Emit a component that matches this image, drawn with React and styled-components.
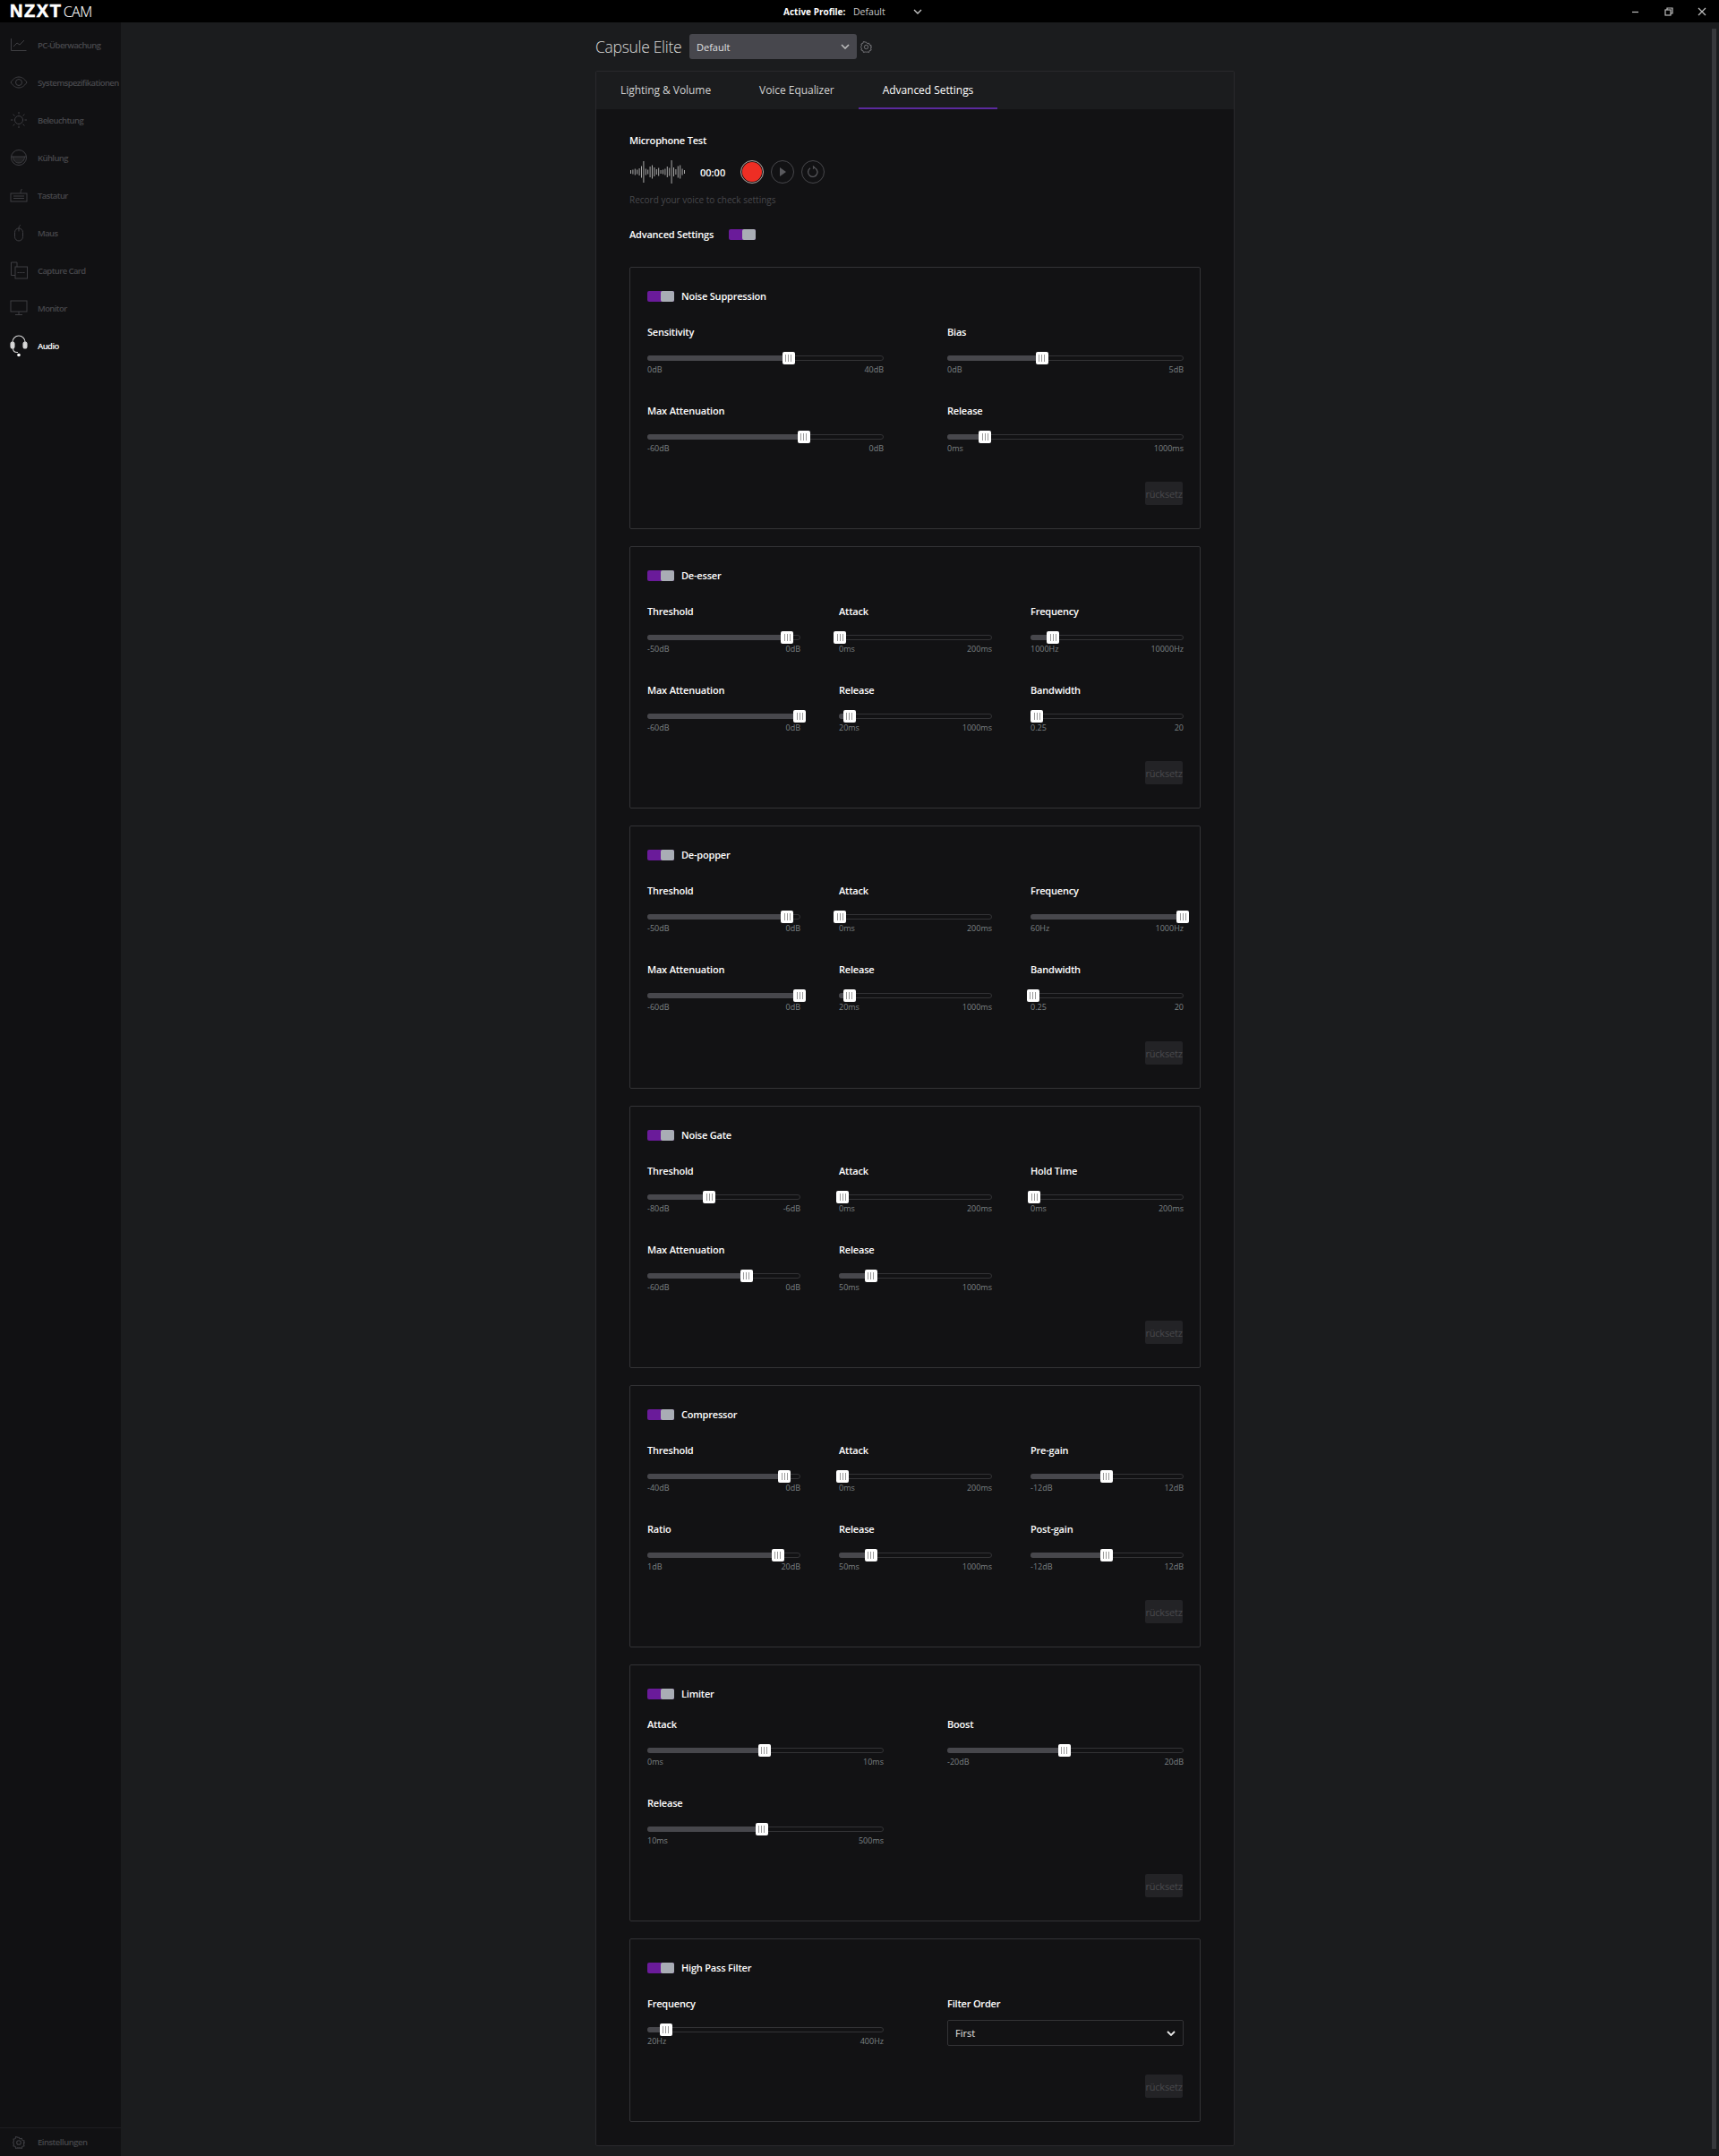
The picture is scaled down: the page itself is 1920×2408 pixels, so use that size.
import React from "react";
import styled, { createGlobalStyle } from "styled-components";

const Global = createGlobalStyle`
  html, body {
    margin: 0;
    padding: 0;
    background: #1b1c1e;
    font-family: "Open Sans", "Noto Sans", sans-serif;
  }
  * { box-sizing: border-box; }
`;

const Shell = styled.div`
  width: 1920px;
  height: 2408px;
  display: flex;
  flex-direction: column;
  overflow: hidden;
  background: #1b1c1e;
`;

const TopBar = styled.header`
  height: 25px;
  flex: none;
  background: #000;
  display: grid;
  grid-template-columns: 1fr auto 1fr;
  align-items: center;
  color: #fff;
`;

const Logo = styled.div`
  display: flex;
  align-items: baseline;
  padding-left: 11px;
`;

const LogoMark = styled.span`
  font-family: "Liberation Sans", sans-serif;
  font-weight: 700;
  font-size: 20px;
  line-height: 25px;
  letter-spacing: 1.6px;
  -webkit-text-stroke: 0.6px #fff;
`;

const LogoCam = styled.span`
  font-family: "Noto Sans", sans-serif;
  font-weight: 300;
  font-size: 16px;
  letter-spacing: -0.5px;
  margin-left: 1px;
`;

const ProfilePick = styled.div`
  display: flex;
  align-items: center;
  font-size: 10px;
  margin-right: 15px;
`;

const ProfileLabel = styled.span`
  font-weight: 700;
  width: 78px;
`;

const ProfileValue = styled.span`
  color: #c9c9c9;
  width: 67px;
  font-size: 10.5px;
`;

const WindowButtons = styled.div`
  display: flex;
  justify-content: flex-end;
  align-items: center;
  gap: 27px;
  padding-right: 14px;
  color: #bdbdbd;
`;

const Body = styled.div`
  flex: 1;
  display: flex;
  min-height: 0;
`;

const Sidebar = styled.nav`
  width: 135px;
  flex: none;
  background: #111113;
  display: flex;
  flex-direction: column;
  padding-top: 4px;
`;

const NavItem = styled.div`
  height: 42px;
  display: flex;
  align-items: center;
  color: ${(p) => (p.$active ? "#fff" : "#47474b")};
  font-size: 9.5px;
  font-weight: 600;
  letter-spacing: -0.6px;
  white-space: nowrap;
`;

const NavIcon = styled.span`
  width: 42px;
  flex: none;
  display: flex;
  justify-content: center;
  color: ${(p) => (p.$active ? "#d8d8d8" : "#3e3e42")};
`;

const SidebarFoot = styled.div`
  margin-top: auto;
  height: 32px;
  border-top: 1px solid #1d1d20;
  display: flex;
  align-items: center;
  color: #47474b;
  font-size: 9.5px;
  font-weight: 600;
  letter-spacing: -0.5px;
`;

const Main = styled.main`
  flex: 1;
  position: relative;
  padding-left: 530px;
`;

const ScrollTrack = styled.div`
  position: absolute;
  top: 7px;
  right: 3px;
  bottom: 8px;
  width: 5px;
  background: #37383b;
`;

const Column = styled.div`
  width: 714px;
`;

const DeviceRow = styled.div`
  height: 54px;
  display: flex;
  align-items: center;
`;

const DeviceName = styled.h1`
  margin: 0;
  width: 105px;
  font-size: 17.5px;
  font-weight: 300;
  color: #dcdcdc;
  letter-spacing: -0.3px;
  white-space: nowrap;
`;

const ProfileSelect = styled.div`
  width: 187px;
  height: 28px;
  background: #47474d;
  border-radius: 3px;
  color: #e0e0e0;
  font-size: 11px;
  display: flex;
  align-items: center;
  justify-content: space-between;
  padding: 0 8px;
`;

const GearWrap = styled.span`
  display: flex;
  margin-left: 4px;
  color: #77777b;
`;

const Panel = styled.section`
  height: 2318px;
  border: 1px solid #29292c;
  border-radius: 2px;
  background: #121214;
`;

const Tabs = styled.div`
  height: 42px;
  display: flex;
  background: #1b1c1e;
`;

const Tab = styled.div`
  padding: 0 27px;
  display: flex;
  align-items: center;
  height: 42px;
  font-size: 12px;
  letter-spacing: -0.05px;
  color: ${(p) => (p.$active ? "#fff" : "#d2d2d2")};
  border-bottom: 2px solid ${(p) => (p.$active ? "#5b2a9d" : "transparent")};
  white-space: nowrap;
`;

const Content = styled.div`
  padding: 25px 37px 0;
`;

const BoldLabel = styled.div`
  font-size: 11px;
  font-weight: 600;
  line-height: 20px;
  color: #fff;
  white-space: nowrap;
  letter-spacing: -0.2px;
`;

const MicRow = styled.div`
  display: flex;
  align-items: center;
  height: 28px;
  margin-top: 11px;
  padding-left: 1px;
`;

const Time = styled.span`
  font-size: 11px;
  font-weight: 600;
  color: #fff;
  width: 45px;
  margin-left: 16px;
`;

const RoundBtn = styled.span`
  width: 26px;
  height: 26px;
  flex: none;
  border-radius: 50%;
  border: 1px solid ${(p) => (p.$rec ? "#b9a9a5" : "#47474b")};
  margin-right: 8px;
  display: flex;
  align-items: center;
  justify-content: center;
  color: #5a5a5e;
`;

const RecDot = styled.span`
  width: 22px;
  height: 22px;
  border-radius: 50%;
  background: #ee2e24;
`;

const Hint = styled.div`
  margin-top: 9px;
  font-size: 10px;
  line-height: 16px;
  color: #48484c;
`;

const AdvancedRow = styled.div`
  display: flex;
  align-items: center;
  gap: 17px;
  margin-top: 21px;
  height: 20px;
`;

const Toggle = styled.span`
  width: 30px;
  height: 12px;
  flex: none;
  display: flex;
  justify-content: flex-end;
  background: #6a1b9a;
  border-radius: 2px;
`;

const ToggleKnob = styled.span`
  width: 15px;
  height: 12px;
  background: #a9adb5;
  border-radius: 2px;
`;

const Stack = styled.div`
  display: flex;
  flex-direction: column;
  gap: 19px;
  margin-top: 26px;
`;

const Card = styled.div`
  height: ${(p) => p.$h}px;
  border: 1px solid #333336;
  border-radius: 2px;
  padding: 0 18px 0 19px;
  display: flex;
  flex-direction: column;
  position: relative;
`;

const CardHead = styled.div`
  display: flex;
  align-items: center;
  gap: 8px;
  height: 20px;
  margin-top: 22px;
`;

const SliderGrid = styled.div`
  display: grid;
  grid-template-columns: repeat(${(p) => p.$cols}, ${(p) => (p.$cols === 3 ? "171px" : "264px")});
  justify-content: space-between;
  row-gap: 29px;
  margin-top: ${(p) => (p.$tight ? 14 : 20)}px;
`;

const SliderCell = styled.div`
  display: flex;
  flex-direction: column;
`;

const Track = styled.div`
  position: relative;
  height: 6px;
  margin-top: 16px;
  border: 1px solid #333336;
  border-radius: 3px;
`;

const TrackFill = styled.div`
  margin: -1px 0 0 -1px;
  height: 6px;
  background: #47474c;
  border-radius: 3px 0 0 3px;
`;

const Thumb = styled.span`
  position: absolute;
  top: -5px;
  width: 14px;
  height: 14px;
  margin-left: -7px;
  background: #fff;
  border-radius: 2px;
  display: flex;
  align-items: center;
  justify-content: center;
  gap: 2px;
`;

const Grip = styled.i`
  width: 1px;
  height: 8px;
  background: #9a9a9a;
`;

const Range = styled.div`
  display: flex;
  justify-content: space-between;
  margin-top: 3px;
  font-size: 9px;
  line-height: 14px;
  color: #7d8285;
`;

const Foot = styled.div`
  position: absolute;
  right: 19px;
  bottom: 26px;
`;

const ResetBtn = styled.span`
  display: flex;
  width: 42px;
  height: 26px;
  align-items: center;
  justify-content: center;
  background: #232326;
  border-radius: 2px;
  color: #49494d;
  font-size: 11px;
  letter-spacing: -0.2px;
  white-space: nowrap;
  overflow: hidden;
`;

const OrderSelect = styled.div`
  height: 29px;
  margin-top: 8px;
  border: 1px solid #333336;
  border-radius: 2px;
  display: flex;
  align-items: center;
  justify-content: space-between;
  padding: 0 8px;
  color: #e2e2e2;
  font-size: 11px;
`;

const Svg = ({ w = 24, h = 24, children, sw = 1 }) => (
  <svg width={w} height={h} viewBox={`0 0 ${w} ${h}`} fill="none" stroke="currentColor" strokeWidth={sw}>
    {children}
  </svg>
);

const Chevron = ({ color = "currentColor", sw = 1.3 }) => (
  <svg width="10" height="6" viewBox="0 0 10 6" fill="none" stroke={color} strokeWidth={sw}>
    <path d="M1 1l4 4 4-4" />
  </svg>
);

const Gear = ({ size = 14 }) => (
  <svg width={size} height={size} viewBox="0 0 24 24" fill="none" stroke="currentColor" strokeWidth="1.8">
    <path d="M12 2l2.2 2.900 3.600-.9.900 3.600 3.600.9-.9 3.600L23 12l-1.600 2.900.9 3.600-3.600.9-.9 3.600-3.600-.9L12 22.500l-2.200-.4-3.600.9-.9-3.600-3.600-.9.9-3.600L1 12l1.600-2.900-.9-3.600 3.600-.9.9-3.600 3.600.9z" />
    <circle cx="12" cy="12" r="4" />
  </svg>
);

const navIcons = {
  monitor: (
    <Svg w={20} h={18}>
      <path d="M1.500 2v13.500h17" />
      <path d="M4 11l4-4 3 2 5-5" />
    </Svg>
  ),
  eye: (
    <Svg w={20} h={16}>
      <path d="M1 8c3-4.500 6-6 9-6s6 1.500 9 6c-3 4.500-6 6-9 6s-6-1.500-9-6z" />
      <circle cx="10" cy="8" r="3.500" />
    </Svg>
  ),
  sun: (
    <Svg w={20} h={20}>
      <circle cx="10" cy="10" r="4.500" />
      <path d="M10 1v2.500M10 16.500V19M1 10h2.500M16.500 10H19M3.600 3.600l1.800 1.800M14.600 14.600l1.800 1.800M3.600 16.400l1.800-1.800M14.600 5.400l1.800-1.800" />
    </Svg>
  ),
  cool: (
    <Svg w={20} h={20}>
      <circle cx="10" cy="10" r="8.500" />
      <path d="M1.500 9h17" />
      <path d="M3.500 9c0 4 3 7 6.500 7s6.500-3 6.500-7" fill="currentColor" fillOpacity="0.35" />
    </Svg>
  ),
  keys: (
    <Svg w={20} h={18}>
      <rect x="1" y="7" width="18" height="9" />
      <path d="M4 10h12M4 12.500h12M12 7c0-2 .5-4 1.500-5" />
    </Svg>
  ),
  mouse: (
    <Svg w={12} h={20}>
      <rect x="1.500" y="5" width="9" height="14" rx="4.500" />
      <path d="M6 5V8.500M6 5c0-2 1-3 2-4" />
    </Svg>
  ),
  card: (
    <Svg w={20} h={20}>
      <path d="M6 15.500H1.500V1H8v5" />
      <rect x="6" y="6" width="13.500" height="13" />
      <path d="M8.500 12.500h8.500" strokeDasharray="1.500 .5" />
    </Svg>
  ),
  screen: (
    <Svg w={20} h={18}>
      <rect x="1" y="1" width="18" height="12" />
      <path d="M10 13v3M6 16.500h8" />
    </Svg>
  ),
  audio: (
    <Svg w={20} h={26} sw={1.1}>
      <path d="M3 11V9a7 7 0 0 1 14 0v2" />
      <rect x="1" y="9" width="4" height="7" rx="2" fill="currentColor" />
      <rect x="15" y="9" width="4" height="7" rx="2" fill="currentColor" />
      <path d="M3.500 16c0 3 2 4.500 4.500 4.500h1" />
      <circle cx="10" cy="23.500" r="1.800" fill="#fff" stroke="none" />
    </Svg>
  ),
};

const navItems = [
  ["PC-Überwachung", "monitor"],
  ["Systemspezifikationen", "eye"],
  ["Beleuchtung", "sun"],
  ["Kühlung", "cool"],
  ["Tastatur", "keys"],
  ["Maus", "mouse"],
  ["Capture Card", "card"],
  ["Monitor", "screen"],
  ["Audio", "audio"],
];

const waveBars = [4, 5, 7, 5, 8, 13, 24, 7, 5, 12, 15, 10, 6, 9, 4, 5, 7, 12, 9, 26, 10, 6, 13, 15, 7, 4];

const Wave = () => (
  <svg width="62" height="26" viewBox="0 0 62 26" stroke="#a8a8a8" strokeWidth="1">
    {waveBars.map((h, i) => (
      <line key={i} x1={i * 2.4 + 0.5} x2={i * 2.4 + 0.5} y1={13 - h / 2} y2={13 + h / 2} />
    ))}
  </svg>
);

const cards = [
  {
    title: "Noise Suppression", cols: 2, h: 293,
    sliders: [
      ["Sensitivity", "0dB", "40dB", 0.599],
      ["Bias", "0dB", "5dB", 0.4],
      ["Max Attenuation", "-60dB", "0dB", 0.663],
      ["Release", "0ms", "1000ms", 0.158],
    ],
  },
  {
    title: "De-esser", cols: 3, h: 293,
    sliders: [
      ["Threshold", "-50dB", "0dB", 0.919],
      ["Attack", "0ms", "200ms", 0],
      ["Frequency", "1000Hz", "10000Hz", 0.144],
      ["Max Attenuation", "-60dB", "0dB", 1],
      ["Release", "20ms", "1000ms", 0.063],
      ["Bandwidth", "0.25", "20", 0.036],
    ],
  },
  {
    title: "De-popper", cols: 3, h: 294,
    sliders: [
      ["Threshold", "-50dB", "0dB", 0.919],
      ["Attack", "0ms", "200ms", 0],
      ["Frequency", "60Hz", "1000Hz", 1],
      ["Max Attenuation", "-60dB", "0dB", 1],
      ["Release", "20ms", "1000ms", 0.063],
      ["Bandwidth", "0.25", "20", 0.01],
    ],
  },
  {
    title: "Noise Gate", cols: 3, h: 293,
    sliders: [
      ["Threshold", "-80dB", "-6dB", 0.405],
      ["Attack", "0ms", "200ms", 0.018],
      ["Hold Time", "0ms", "200ms", 0.018],
      ["Max Attenuation", "-60dB", "0dB", 0.649],
      ["Release", "50ms", "1000ms", 0.207],
    ],
  },
  {
    title: "Compressor", cols: 3, h: 293,
    sliders: [
      ["Threshold", "-40dB", "0dB", 0.9],
      ["Attack", "0ms", "200ms", 0.018],
      ["Pre-gain", "-12dB", "12dB", 0.495],
      ["Ratio", "1dB", "20dB", 0.856],
      ["Release", "50ms", "1000ms", 0.207],
      ["Post-gain", "-12dB", "12dB", 0.495],
    ],
  },
  {
    title: "Limiter", cols: 2, h: 287, tight: true,
    sliders: [
      ["Attack", "0ms", "10ms", 0.495],
      ["Boost", "-20dB", "20dB", 0.495],
      ["Release", "10ms", "500ms", 0.483],
    ],
  },
  {
    title: "High Pass Filter", cols: 2, h: 205,
    sliders: [["Frequency", "20Hz", "400Hz", 0.076]],
    order: true,
  },
];

function Slider({ label, min, max, value }) {
  return (
    <SliderCell>
      <BoldLabel>{label}</BoldLabel>
      <Track>
        <TrackFill style={{ width: `${value * 100}%` }} />
        <Thumb style={{ left: `${value * 100}%` }}>
          <Grip />
          <Grip />
          <Grip />
        </Thumb>
      </Track>
      <Range>
        <span>{min}</span>
        <span>{max}</span>
      </Range>
    </SliderCell>
  );
}

function EffectCard({ card }) {
  return (
    <Card $h={card.h}>
      <CardHead>
        <Toggle>
          <ToggleKnob />
        </Toggle>
        <BoldLabel>{card.title}</BoldLabel>
      </CardHead>
      <SliderGrid $cols={card.cols} $tight={card.tight}>
        {card.sliders.map(([label, min, max, value]) => (
          <Slider key={label} label={label} min={min} max={max} value={value} />
        ))}
        {card.order && (
          <SliderCell>
            <BoldLabel>Filter Order</BoldLabel>
            <OrderSelect>
              First
              <Chevron color="#e8e8e8" sw={1.8} />
            </OrderSelect>
          </SliderCell>
        )}
      </SliderGrid>
      <Foot>
        <ResetBtn>rücksetz</ResetBtn>
      </Foot>
    </Card>
  );
}

export default function App() {
  return (
    <Shell>
      <Global />
      <TopBar>
        <Logo>
          <LogoMark>NZXT</LogoMark>
          <LogoCam>CAM</LogoCam>
        </Logo>
        <ProfilePick>
          <ProfileLabel>Active Profile:</ProfileLabel>
          <ProfileValue>Default</ProfileValue>
          <Chevron color="#c9c9c9" />
        </ProfilePick>
        <WindowButtons>
          <svg width="10" height="10" viewBox="0 0 10 10" stroke="currentColor" strokeWidth="1.2">
            <path d="M1 5.500h7" />
          </svg>
          <svg width="10" height="10" viewBox="0 0 10 10" fill="none" stroke="currentColor" strokeWidth="1.200">
            <rect x="1" y="3" width="6" height="6" />
            <path d="M3 3V1h6v6H7" />
          </svg>
          <svg width="10" height="10" viewBox="0 0 10 10" stroke="currentColor" strokeWidth="1.200">
            <path d="M1 1l8 8M9 1l-8 8" />
          </svg>
        </WindowButtons>
      </TopBar>
      <Body>
        <Sidebar>
          {navItems.map(([label, icon]) => (
            <NavItem key={label} $active={label === "Audio"}>
              <NavIcon $active={label === "Audio"}>{navIcons[icon]}</NavIcon>
              {label}
            </NavItem>
          ))}
          <SidebarFoot>
            <NavIcon>
              <Gear />
            </NavIcon>
            Einstellungen
          </SidebarFoot>
        </Sidebar>
        <Main>
          <ScrollTrack />
          <Column>
            <DeviceRow>
              <DeviceName>Capsule Elite</DeviceName>
              <ProfileSelect>
                Default
                <Chevron color="#bdbdbd" sw={1.6} />
              </ProfileSelect>
              <GearWrap>
                <Gear size={13} />
              </GearWrap>
            </DeviceRow>
            <Panel>
              <Tabs>
                <Tab>Lighting &amp; Volume</Tab>
                <Tab>Voice Equalizer</Tab>
                <Tab $active>Advanced Settings</Tab>
              </Tabs>
              <Content>
                <BoldLabel>Microphone Test</BoldLabel>
                <MicRow>
                  <Wave />
                  <Time>00:00</Time>
                  <RoundBtn $rec>
                    <RecDot />
                  </RoundBtn>
                  <RoundBtn>
                    <svg width="8" height="10" viewBox="0 0 8 10" fill="currentColor">
                      <path d="M1 0l7 5-7 5z" />
                    </svg>
                  </RoundBtn>
                  <RoundBtn>
                    <svg width="14" height="14" viewBox="0 0 14 14" fill="none" stroke="currentColor" strokeWidth="1.200">
                      <path d="M4 2.800a5.200 5.200 0 1 0 3-.8" />
                      <path d="M7 0.500L8.500 2 7 3.500" />
                    </svg>
                  </RoundBtn>
                </MicRow>
                <Hint>Record your voice to check settings</Hint>
                <AdvancedRow>
                  <BoldLabel>Advanced Settings</BoldLabel>
                  <Toggle>
                    <ToggleKnob />
                  </Toggle>
                </AdvancedRow>
                <Stack>
                  {cards.map((card) => (
                    <EffectCard key={card.title} card={card} />
                  ))}
                </Stack>
              </Content>
            </Panel>
          </Column>
        </Main>
      </Body>
    </Shell>
  );
}
